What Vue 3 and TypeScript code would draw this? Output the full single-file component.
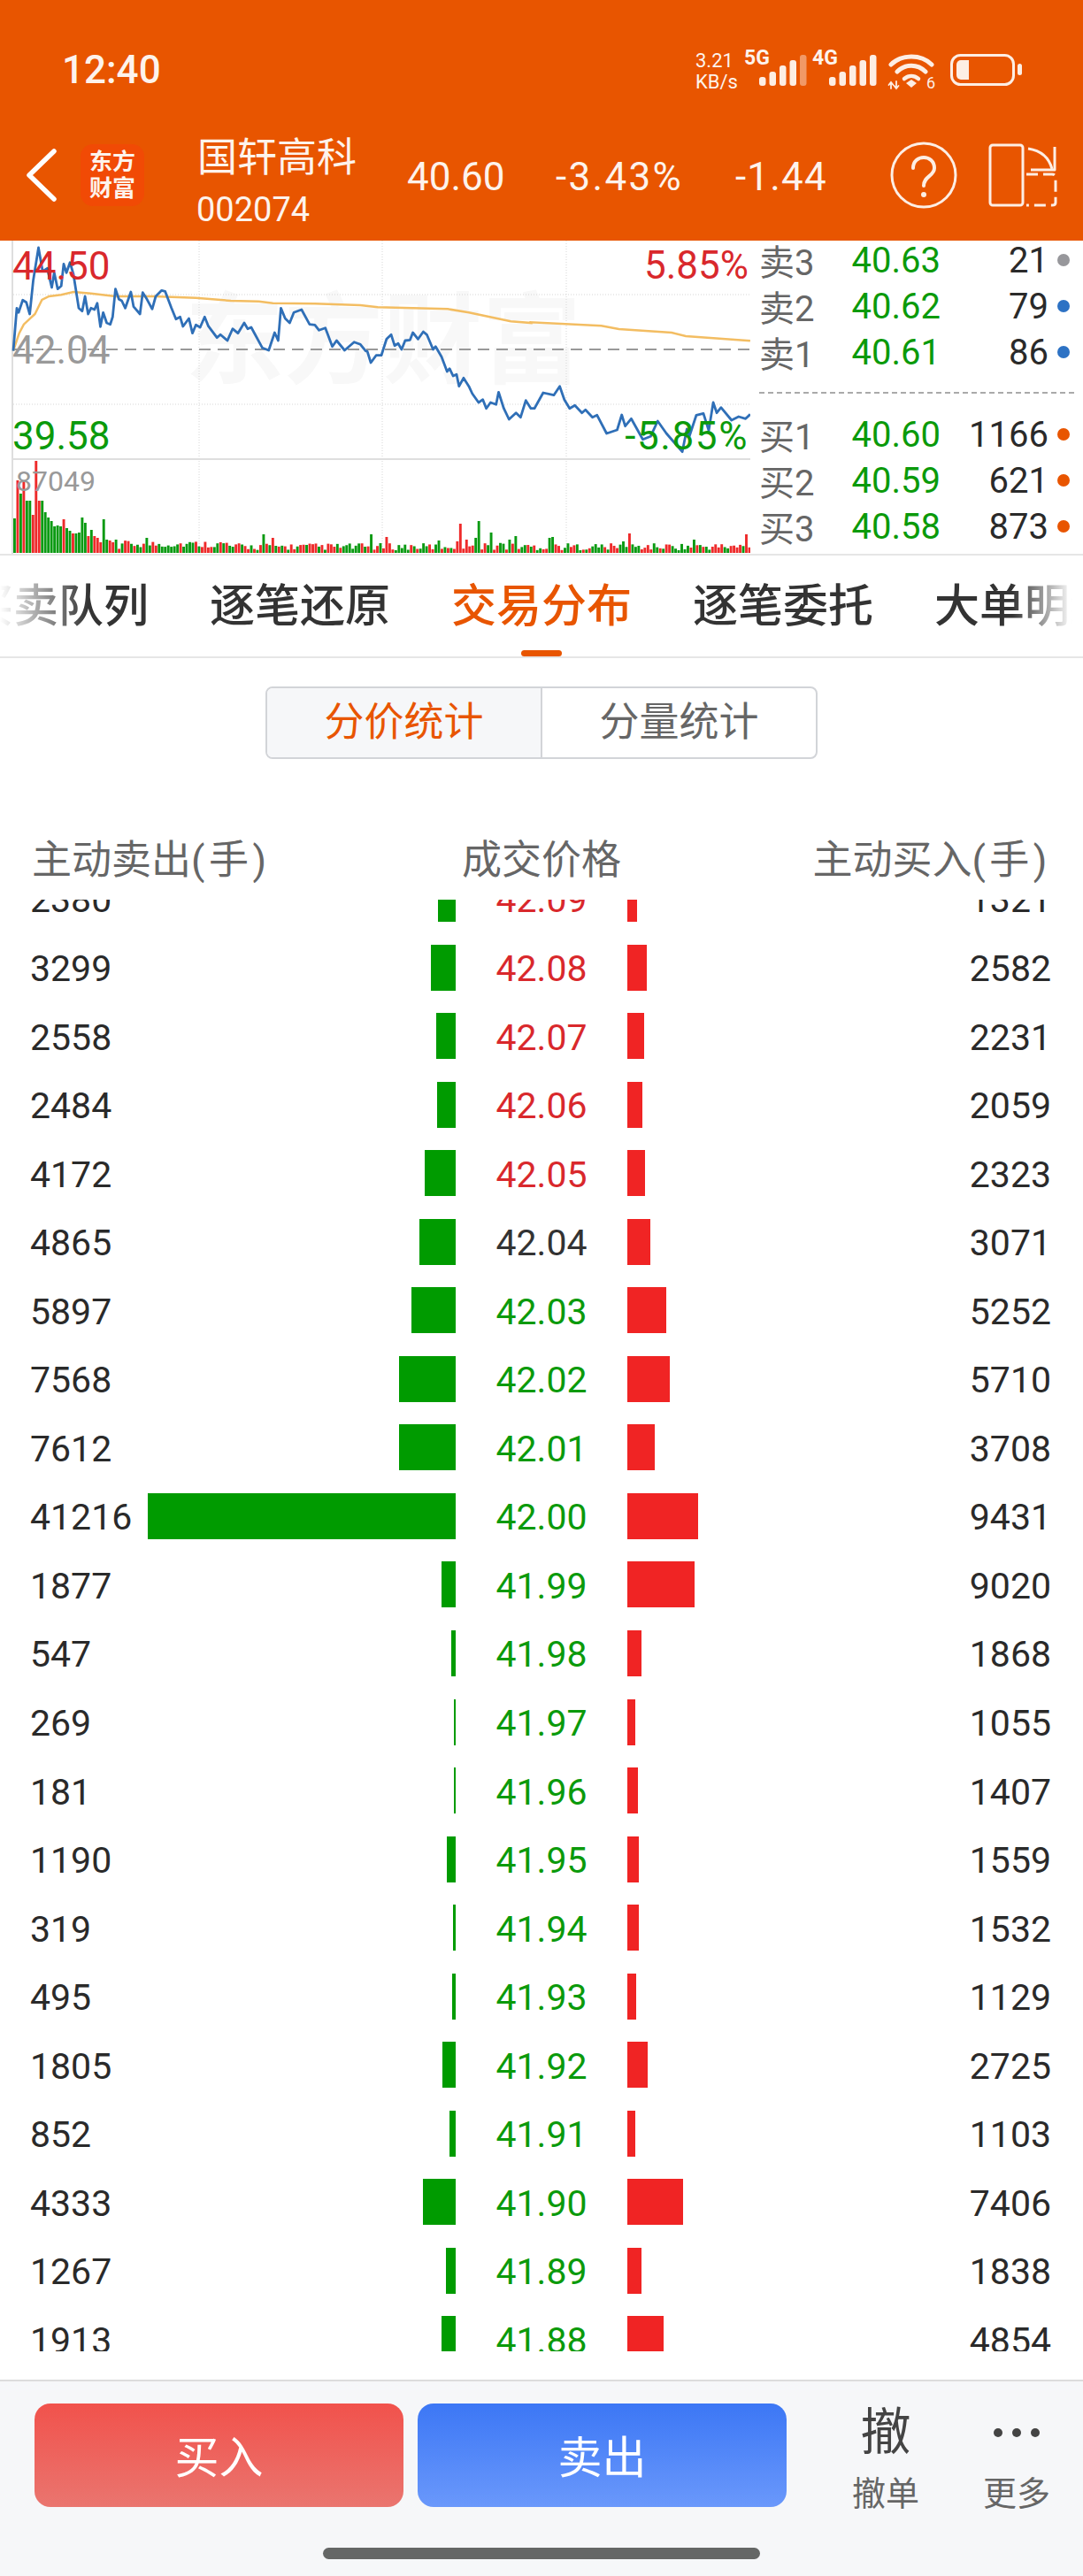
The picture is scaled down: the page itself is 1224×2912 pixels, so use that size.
<template>
  <div class="page">
    <!-- 顶部状态栏 + 标题 -->
    <header class="top">
      <div class="status">
        <span class="clock">12:40</span>
        <div class="speed">3.21<br />KB/s</div>
        <span class="net net-5g">5G</span>
        <svg class="signal sig-a" width="56" height="36" viewBox="0 0 56 36">
          <rect v-for="b in signalBars" :key="b.x" :x="b.x" :y="b.y" width="7.5" :height="35 - b.y" rx="3" fill="#fdeee4" :opacity="b.x > 45 ? 0.45 : 1" />
        </svg>
        <span class="net net-4g">4G</span>
        <svg class="signal sig-b" width="56" height="36" viewBox="0 0 56 36">
          <rect v-for="b in signalBars" :key="b.x" :x="b.x" :y="b.y" width="7.5" :height="35 - b.y" rx="3" fill="#fdeee4" />
        </svg>
        <svg class="wifi" width="56" height="42" viewBox="0 0 56 42" fill="none" stroke="#fdeee4" stroke-linecap="round">
          <path d="M4 13 C16 1 38 1 50 13" stroke-width="5" />
          <path d="M11 21 C20 12 34 12 43 21" stroke-width="5" />
          <path d="M19 29 C24 25 30 25 35 29" stroke-width="4.5" />
          <path d="M21 34 L27 30 L33 34 L27 39 Z" fill="#fdeee4" stroke="none" />
          <path d="M4 40 V33 M1.5 36 L4 33 L6.5 36 M10 32 V40 M7.5 37 L10 40 L12.5 37" stroke-width="1.8" />
          <text x="44" y="40" class="wifi-num">6</text>
        </svg>
        <svg class="battery" width="82" height="36" viewBox="0 0 82 36">
          <rect x="1.5" y="1.5" width="70" height="33" rx="10" fill="none" stroke="#fdeee4" stroke-width="3" />
          <path d="M7 12 a5 5 0 0 1 5 -5 h9 v22 h-9 a5 5 0 0 1 -5 -5 Z" fill="#fdeee4" />
          <rect x="76" y="11" width="5" height="13" rx="2.5" fill="#fdeee4" />
        </svg>
      </div>
      <div class="nav">
        <svg class="back" width="36" height="62" viewBox="0 0 36 62" fill="none" stroke="#fff" stroke-width="5.5" stroke-linecap="round" stroke-linejoin="round">
          <path d="M32 4 L4 31 L32 58" />
        </svg>
        <div class="logo">东方<br />财富</div>
        <div class="stock">
          <div class="stock-name">国轩高科</div>
          <div class="stock-code">002074</div>
        </div>
        <span class="quote q-price">40.60</span>
        <span class="quote q-pct">-3.43%</span>
        <span class="quote q-chg">-1.44</span>
        <svg class="help" width="76" height="76" viewBox="0 0 76 76" fill="none" stroke="#fdeee4" stroke-width="3">
          <circle cx="38" cy="38" r="36" />
          <path d="M26 30 C26 14 50 14 50 30 C50 39 38 39 38 50" stroke-width="4" stroke-linecap="round" />
          <circle cx="38" cy="60" r="3" fill="#fdeee4" stroke="none" />
        </svg>
        <svg class="panel" width="78" height="72" viewBox="0 0 78 72" fill="none" stroke="#fdeee4" stroke-width="3" stroke-linejoin="round">
          <rect x="2" y="2" width="37" height="68" rx="3" />
          <path d="M45 6 C58 8 68 14 72 29" />
          <path d="M75 4 V30 H48" />
          <path d="M43 35 H72 Q76 35 76 39 V67 Q76 70 72 70 H43" stroke-dasharray="13 6" />
        </svg>
      </div>
    </header>

    <!-- 分时 + 五档 -->
    <section class="quote-panel">
      <div class="chart">
        <div class="watermark">东方财富</div>
        <svg class="chart-svg" width="835" height="354" viewBox="0 0 835 354">
          <line x1="1" y1="0" x2="1" y2="354" stroke="#dedede" stroke-width="2" />
          <line v-for="y in [61, 185]" :key="y" x1="2" :y1="y" x2="835" :y2="y" stroke="#d6d6d6" stroke-dasharray="1 2" />
          <line v-for="x in [212, 419, 627]" :key="x" :x1="x" y1="0" :x2="x" y2="354" stroke="#d6d6d6" stroke-dasharray="1 2" />
          <line x1="2" y1="123" x2="835" y2="123" stroke="#999" stroke-width="2" stroke-dasharray="13 8" />
          <line x1="2" y1="247" x2="835" y2="247" stroke="#dedede" stroke-width="2" />
          <rect v-for="(v, i) in volumes" :key="i" :x="v.x" :y="353 - v.h" width="2.9" :height="v.h" :fill="v.up ? '#ee2a2a' : '#0a9a12'" />
          <polyline :points="avgLine" fill="none" stroke="#f3bd62" stroke-width="2.5" />
          <polyline :points="priceLine" fill="none" stroke="#2f6fb7" stroke-width="2.8" stroke-linejoin="round" />
        </svg>
        <span class="axis red a-high">44.50</span>
        <span class="axis gray a-mid">42.04</span>
        <span class="axis green a-low">39.58</span>
        <span class="axis red a-up">5.85%</span>
        <span class="axis green a-down">-5.85%</span>
        <span class="a-vol">87049</span>
      </div>
      <div class="book">
        <div v-for="(item, i) in bookRows" :key="item.label" class="book-row" :class="{ 'book-gap': i === 3 }">
          <span class="book-label">{{ item.label }}</span>
          <span class="book-price">{{ item.price }}</span>
          <span class="book-vol">{{ item.vol }}</span>
          <i class="book-dot" :style="{ background: item.dot }"></i>
        </div>
        <div class="book-sep"></div>
      </div>
    </section>

    <!-- tab -->
    <nav class="tabs">
      <div class="tab-track">
        <span v-for="tab in tabs" :key="tab" class="tab" :class="{ active: tab === '交易分布' }">{{ tab }}</span>
      </div>
    </nav>

    <section class="dist">
      <div class="segment">
        <span class="seg on">分价统计</span>
        <span class="seg">分量统计</span>
      </div>
      <div class="dist-head">
        <span>主动卖出<em class="unit">(手)</em></span>
        <span>成交价格</span>
        <span>主动买入<em class="unit">(手)</em></span>
      </div>
      <div class="dist-list">
        <div class="dist-scroll">
          <div v-for="row in rows" :key="row.price" class="dist-row">
            <div class="cell-left">
              <span class="num">{{ row.sell }}</span>
              <i class="bar bar-sell" :style="{ width: barWidth(row.sell) }"></i>
            </div>
            <span class="dist-price num" :class="priceClass(row.price)">{{ row.price.toFixed(2) }}</span>
            <div class="cell-right">
              <i class="bar bar-buy" :style="{ width: barWidth(row.buy) }"></i>
              <span class="num">{{ row.buy }}</span>
            </div>
          </div>
        </div>
      </div>
    </section>

    <!-- 底部操作 -->
    <footer class="foot">
      <div class="actions">
        <button class="trade buy">买入</button>
        <button class="trade sell">卖出</button>
        <div class="tool tool-cancel">
          <span class="tool-big">撤</span>
          <span class="tool-text">撤单</span>
        </div>
        <div class="tool tool-more">
          <span class="dots"><i></i><i></i><i></i></span>
          <span class="tool-text">更多</span>
        </div>
      </div>
      <div class="home-bar"></div>
    </footer>
  </div>
</template>

<script setup lang="ts">
interface DistRow {
  price: number
  sell: number
  buy: number
}

const signalBars = [
  { x: 0, y: 25 },
  { x: 11.5, y: 19 },
  { x: 23, y: 12 },
  { x: 34.5, y: 6 },
  { x: 46, y: 0 },
]

const tabs = ['买卖队列', '逐笔还原', '交易分布', '逐笔委托', '大单明细']

const bookRows = [
  { label: '卖3', price: '40.63', vol: 21, dot: '#97979b' },
  { label: '卖2', price: '40.62', vol: 79, dot: '#2d72c4' },
  { label: '卖1', price: '40.61', vol: 86, dot: '#2d72c4' },
  { label: '买1', price: '40.60', vol: 1166, dot: '#e85500' },
  { label: '买2', price: '40.59', vol: 621, dot: '#e85500' },
  { label: '买3', price: '40.58', vol: 873, dot: '#e85500' },
]

const raw: [number, number, number][] = [
  [42.09, 2380, 1321], [42.08, 3299, 2582], [42.07, 2558, 2231], [42.06, 2484, 2059],
  [42.05, 4172, 2323], [42.04, 4865, 3071], [42.03, 5897, 5252], [42.02, 7568, 5710],
  [42.01, 7612, 3708], [42.0, 41216, 9431], [41.99, 1877, 9020], [41.98, 547, 1868],
  [41.97, 269, 1055], [41.96, 181, 1407], [41.95, 1190, 1559], [41.94, 319, 1532],
  [41.93, 495, 1129], [41.92, 1805, 2725], [41.91, 852, 1103], [41.9, 4333, 7406],
  [41.89, 1267, 1838], [41.88, 1913, 4854],
]
const rows: DistRow[] = raw.map(([price, sell, buy]) => ({ price, sell, buy }))

const barWidth = (vol: number): string => `${Math.max(vol * 0.00845, 1.5)}px`

const priceClass = (price: number): string => {
  if (price > 42.04) return 'red'
  if (price < 42.04) return 'green'
  return 'flat'
}

// 分时线，按截图描点（前半段、后半段两次放大的坐标）
const priceA = [38,380,48,235,53,250,65,208,75,215,85,255,95,140,110,30,122,110,135,100,148,165,155,115,165,170,175,160,182,85,190,115,200,80,210,120,225,235,235,245,243,195,252,255,260,235,270,240,278,218,287,298,295,250,305,285,315,290,322,265,330,170,340,205,348,210,358,235,374,180,382,230,400,255,408,182,420,205,435,238,445,195,462,175,472,178,490,235,503,272,515,265,523,297,540,270,550,320,560,292,572,300,585,265,595,295,620,335,630,325,650,345,665,305,680,320,698,285,708,305,718,300,750,370,768,378,785,318,795,345,803,235,815,270,828,285,840,250,862,240,885,290,900,292,912,310,930,302,950,365,962,345,985,378,1012,350,1030,358,1045,380,1050,382,1060,420,1075,395,1090,395,1105,340,1118,325,1128,362,1138,355,1148,375,1158,345,1172,343,1180,318,1195,340,1210,315,1220,325,1238,375,1245,365,1262,400,1278,450,1285,440,1295,465,1305,460,1312,500,1325,472,1340,500,1350,525,1368,555,1380,545,1390,575,1402,555,1418,562,1425,520,1440,575,1455,612,1475,590,1488,605,1503,548]
const priceB = [0,575,10,575,35,522,65,530,82,500,95,545,110,575,125,565,145,590,155,580,175,605,188,598,215,660,245,648,258,597,268,635,285,610,318,680,340,670,360,618,385,660,430,722,443,645,450,670,470,598,490,592,505,650,518,555,528,590,540,572,570,615,590,603,610,610,623,595]
const avgA = [38,380,55,320,68,290,100,255,120,207,140,195,175,190,210,180,260,185,330,195,440,195,560,200,660,210,740,212,780,218,900,220,1030,225,1080,232,1280,238,1340,250,1400,265,1460,280,1518,285]
const avgB = [0,283,200,295,250,306,400,318,440,330,623,346]

const fromA = (list: number[]): string[] => {
  const out: string[] = []
  for (let i = 0; i < list.length; i += 2) {
    out.push(`${(list[i] / 2.529 - 13).toFixed(1)},${(list[i + 1] / 3 - 2).toFixed(1)}`)
  }
  return out
}
const fromB = (list: number[]): string[] => {
  const out: string[] = []
  for (let i = 0; i < list.length; i += 2) {
    out.push(`${(list[i] / 2.513 + 587).toFixed(1)},${(list[i + 1] / 3 - 2).toFixed(1)}`)
  }
  return out
}
const priceLine = [...fromA(priceA), ...fromB(priceB)].join(' ')
const avgLine = [...fromA(avgA), ...fromB(avgB)].join(' ')

// 成交量柱：开盘部分和几根高柱照图，其余小柱用固定伪随机补齐
const volumes = (() => {
  const head: [number, number][] = [
    [39, 0], [82, 1], [67, 0], [82, 1], [59, 0], [59, 0], [43, 1], [104, 1], [59, 1], [59, 0],
    [46, 0], [40, 0], [36, 0], [30, 0], [31, 0], [30, 0], [38, 1], [28, 0], [25, 0], [22, 1],
    [22, 0], [23, 0], [40, 0], [34, 0], [19, 1], [26, 0], [19, 1], [17, 1], [12, 1], [38, 0],
    [15, 0], [14, 1], [12, 1], [15, 0],
  ]
  const peaks: Record<number, [number, number]> = {
    81: [21, 0], 84: [17, 1], 116: [21, 0], 121: [18, 1], 145: [33, 1], 151: [36, 0], 155: [23, 0],
    138: [14, 0], 147: [15, 1], 150: [17, 0], 161: [15, 0], 163: [19, 0], 174: [17, 0], 175: [18, 0],
    198: [13, 0], 200: [22, 1], 221: [15, 0], 238: [21, 1], 43: [17, 0],
  }
  const list: { x: number; h: number; up: boolean }[] = []
  for (let i = 0; i < 240; i++) {
    const noise = Math.abs(Math.sin(i * 12.9898) * 43758.5453) % 1
    const tone = Math.abs(Math.sin(i * 78.233) * 12543.13) % 1
    let h = 3 + noise * (i > 140 && i < 160 ? 11 : 8)
    if (i > 34 && i < 70) h += 3
    let up = tone > 0.5
    if (head[i]) {
      h = head[i][0]
      up = head[i][1] === 1
    }
    if (peaks[i]) {
      h = peaks[i][0]
      up = peaks[i][1] === 1
    }
    list.push({ x: 2 + i * 3.475, h, up })
  }
  return list
})()
</script>

<style scoped>
.page {
  width: 1224px;
  height: 2912px;
  display: flex;
  flex-direction: column;
  background: #fff;
  overflow: hidden;
  font-family: Roboto, "Noto Sans CJK SC", sans-serif;
  color: #333;
}

.top {
  height: 272px;
  background: #e85500;
  color: #fdf3ec;
  flex: none;
}

.status {
  height: 142px;
  display: flex;
  align-items: flex-start;
  padding-left: 70px;
}

.clock {
  font-size: 44px;
  line-height: 52px;
  margin-top: 53px;
  width: 716px;
  flex: none;
  font-weight: 500;
}

.speed {
  font-size: 22px;
  line-height: 24px;
  margin-top: 57px;
  width: 55px;
  flex: none;
}

.net {
  font-size: 23px;
  font-weight: 700;
  line-height: 24px;
  margin-top: 54px;
  flex: none;
}

.net-5g {
  width: 30px;
  margin-right: -13px;
}

.net-4g {
  width: 32px;
  margin-right: -13px;
  margin-left: 4px;
}

.signal {
  margin-top: 62px;
  flex: none;
}

.wifi {
  margin: 60px 0 0 10px;
  flex: none;
}

.wifi-num {
  font-size: 18px;
  font-family: Roboto, sans-serif;
  fill: #fdeee4;
  stroke: none;
}

.battery {
  margin: 61px 0 0 15px;
  flex: none;
}

.nav {
  height: 112px;
  display: flex;
  align-items: center;
  padding-left: 29px;
}

.back,
.logo,
.stock,
.quote,
.help,
.panel {
  flex: none;
}

.logo {
  width: 72px;
  height: 70px;
  margin-left: 26px;
  background: #f14a05;
  border-radius: 14px;
  color: #fdf3ec;
  font-size: 26px;
  font-weight: 700;
  line-height: 30px;
  text-align: center;
  padding-top: 5px;
  box-sizing: border-box;
}

.stock {
  width: 237px;
  margin-left: 60px;
  padding-top: 21px;
}

.stock-name {
  font-size: 45px;
  line-height: 56px;
}

.stock-code {
  font-size: 38px;
  line-height: 60px;
  margin-left: -1px;
}

.quote {
  font-size: 44px;
  line-height: 52px;
  margin-top: 3px;
}

.q-price {
  width: 168px;
}

.q-pct {
  width: 203px;
  letter-spacing: 2.3px;
}

.q-chg {
  width: 176px;
  letter-spacing: 1.2px;
}

.help {
  margin-left: -1px;
}

.panel {
  margin-left: 35px;
}

.quote-panel {
  height: 354px;
  flex: none;
  display: flex;
  border-bottom: 2px solid #e6e6e6;
}

.chart {
  position: relative;
  width: 835px;
  height: 354px;
  margin-left: 13px;
  flex: none;
  overflow: hidden;
}

.chart-svg {
  position: absolute;
  left: 0;
  top: 0;
}

.watermark {
  position: absolute;
  left: 196px;
  top: 50px;
  font-size: 112px;
  line-height: 130px;
  font-weight: 700;
  color: #f8f8f8;
  white-space: nowrap;
}

.axis {
  position: absolute;
  font-size: 44px;
  line-height: 52px;
}

.a-high {
  left: 1px;
  top: 3px;
}

.a-mid {
  left: 1px;
  top: 98px;
}

.a-low {
  left: 1px;
  top: 195px;
}

.a-up {
  right: 2px;
  top: 2px;
}

.a-down {
  right: 2px;
  top: 195px;
  letter-spacing: 1.6px;
}

.a-vol {
  position: absolute;
  left: 5px;
  top: 253px;
  font-size: 32px;
  line-height: 38px;
  color: #999;
}

.red {
  color: #d9282c;
}

.green {
  color: #0b9a0b;
}

.gray {
  color: #999;
}

.flat {
  color: #333;
}

.book {
  position: relative;
  margin: -7px 0 0 10px;
  width: 366px;
  flex: none;
}

.book-row {
  display: grid;
  grid-template-columns: 71px 134px 122px 14px;
  align-items: center;
  height: 52px;
  font-size: 40px;
}

.book-gap {
  margin-top: 41px;
}

.book-label {
  color: #666;
}

.book-price {
  text-align: right;
  color: #0b9a0b;
}

.book-vol {
  text-align: right;
  color: #2a2a2a;
}

.book-dot {
  width: 14px;
  height: 14px;
  border-radius: 50%;
  margin-left: 10px;
}

.book-sep {
  position: absolute;
  left: 0;
  right: 10px;
  top: 178px;
  border-top: 2px dashed #aaa;
}

.tabs {
  position: relative;
  height: 114px;
  flex: none;
  overflow: hidden;
  border-bottom: 2px solid #e6e6e6;
}

.tabs::before,
.tabs::after {
  content: '';
  position: absolute;
  top: 0;
  bottom: 0;
  z-index: 1;
}

.tabs::before {
  left: 0;
  width: 100px;
  background: linear-gradient(90deg, #fff, rgba(255, 255, 255, 0));
}

.tabs::after {
  right: 0;
  width: 80px;
  background: linear-gradient(270deg, #fff 15%, rgba(255, 255, 255, 0));
}

.tab-track {
  display: flex;
  gap: 69px;
  margin-left: -36px;
  white-space: nowrap;
}

.tab {
  position: relative;
  width: 204px;
  flex: none;
  font-size: 51px;
  font-weight: 500;
  line-height: 116px;
  height: 114px;
  text-align: center;
  color: #333;
}

.tab.active {
  color: #e85500;
}

.tab.active::after {
  content: '';
  position: absolute;
  left: 79px;
  bottom: 0;
  width: 46px;
  height: 7px;
  border-radius: 4px;
  background: #e85500;
}

.dist {
  position: relative;
  flex: 1;
  display: flex;
  flex-direction: column;
}

.segment {
  display: flex;
  align-self: center;
  width: 624px;
  height: 82px;
  margin-top: 32px;
  border: 2px solid #d2d4d8;
  border-radius: 8px;
  box-sizing: border-box;
  overflow: hidden;
  flex: none;
}

.seg {
  flex: 1;
  font-size: 45px;
  line-height: 78px;
  text-align: center;
  color: #666;
}

.seg.on {
  background: #f6f7f9;
  color: #e85500;
  border-right: 2px solid #d2d4d8;
}

.dist-head {
  display: grid;
  grid-template-columns: 1fr 1fr 1fr;
  margin-top: 91px;
  padding: 0 36px;
  font-size: 45px;
  line-height: 48px;
  color: #666;
  flex: none;
}

.dist-head span:nth-child(2) {
  text-align: center;
}

.dist-head span:nth-child(3) {
  text-align: right;
}

.unit {
  font-style: normal;
  letter-spacing: 4.5px;
}

.dist-list {
  height: 1641px;
  margin-top: 20px;
  overflow: hidden;
  flex: none;
}

.dist-scroll {
  margin-top: -39.8px;
}

.dist-row {
  display: grid;
  grid-template-columns: 515px 194px 515px;
  height: 77.55px;
  align-items: center;
  font-size: 41px;
  color: #2a2a2a;
}

.num {
  padding-top: 3px;
}

.cell-left,
.cell-right {
  display: flex;
  align-items: center;
  justify-content: space-between;
}

.cell-left {
  padding-left: 34px;
}

.cell-right {
  padding-right: 36px;
}

.bar {
  display: block;
  height: 52px;
  flex: none;
}

.bar-sell {
  background: #009b00;
}

.bar-buy {
  background: #f02424;
}

.dist-price {
  text-align: center;
}

.foot {
  height: 222px;
  flex: none;
  position: relative;
  background: #f6f7f9;
  border-top: 2px solid #dcdcdc;
  box-sizing: border-box;
}

.actions {
  display: flex;
  padding: 25px 0 0 39px;
}

.trade {
  width: 417px;
  height: 117px;
  border: 0;
  border-radius: 18px;
  padding: 0 0 3px;
  font-family: inherit;
  font-size: 50px;
  color: #fff;
  flex: none;
}

.buy {
  background: linear-gradient(180deg, #f1524c, #ea756f);
}

.sell {
  margin-left: 16px;
  background: linear-gradient(180deg, #3c77f5, #6a98fb);
}

.tool {
  width: 80px;
  display: flex;
  flex-direction: column;
  align-items: center;
  flex: none;
}

.tool-cancel {
  margin-left: 72px;
}

.tool-more {
  margin-left: 68px;
}

.tool-big {
  font-size: 57px;
  line-height: 66px;
  color: #444;
}

.tool-text {
  font-size: 38px;
  line-height: 50px;
  margin-top: 11px;
  color: #666;
  white-space: nowrap;
}

.dots {
  height: 66px;
  display: flex;
  gap: 11px;
  align-items: center;
}

.dots i {
  width: 10px;
  height: 10px;
  border-radius: 50%;
  background: #444;
}

.home-bar {
  position: absolute;
  left: 365px;
  top: 188px;
  width: 494px;
  height: 13px;
  border-radius: 7px;
  background: #656766;
}
</style>

<style>
html,
body {
  margin: 0;
  background: #fff;
}
</style>
